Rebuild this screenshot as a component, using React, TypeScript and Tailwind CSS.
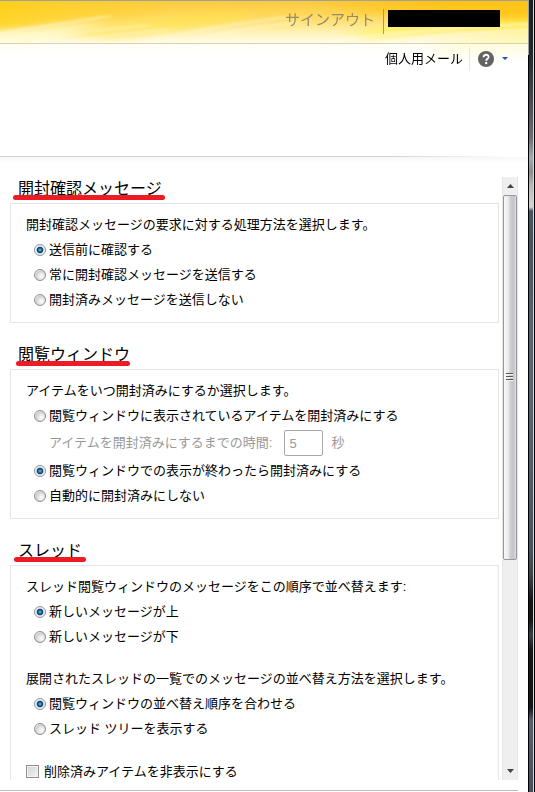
import React, { useState } from "react";

type Option = { value: string; label: string };

function RadioRow({ name, option, checked, onSelect }: { name: string; option: Option; checked: boolean; onSelect: (v: string) => void }) {
  const id = `${name}-${option.value}`;
  return (
    <div className="flex h-[25px] items-center gap-[3px] pl-2">
      <input
        type="radio"
        id={id}
        name={name}
        checked={checked}
        onChange={() => onSelect(option.value)}
        className="size-3 shrink-0 appearance-none rounded-full border border-[#8e8f8f] bg-[radial-gradient(circle_at_65%_65%,#f8f8f8_10%,#e2e2e2_40%,#c8cacc_62%,#f2f2f2_72%)] checked:border-[#8c979f] checked:bg-[radial-gradient(circle_at_50%_50%,#6fd0f4_0%,#2088bc_16%,#103a5e_40%,#e0e7eb_52%,#f6f6f6_75%)]"
      />
      <label htmlFor={id}>{option.label}</label>
    </div>
  );
}

function Section({ title, mark, children }: { title: string; mark: string; children: React.ReactNode }) {
  return (
    <section className="mb-5">
      <h2 className="flex h-[26px] pl-2 text-base leading-6">
        <span className="relative">
          {title}
          <span className={`absolute top-[18px] h-[5px] rounded-full bg-[#ed1c24] ${mark}`} />
        </span>
      </h2>
      <div className="border border-[#e5e5e5] px-[15px] pt-2 pb-2.5">{children}</div>
    </section>
  );
}

function Banner() {
  return (
    <svg className="absolute inset-0 size-full" viewBox="0 0 528 72" preserveAspectRatio="none" aria-hidden="true">
      <defs>
        <linearGradient id="base" x1="0" y1="0" x2="0" y2="1">
          <stop offset="0" stopColor="#ffcb40" />
          <stop offset="0.18" stopColor="#ffd657" />
          <stop offset="0.32" stopColor="#ffe585" />
          <stop offset="0.44" stopColor="#fff3b8" />
          <stop offset="0.56" stopColor="#fffbe0" />
          <stop offset="0.7" stopColor="#fffef6" />
          <stop offset="0.88" stopColor="#ffffff" />
        </linearGradient>
        <linearGradient id="gold" x1="0" y1="0" x2="1" y2="0">
          <stop offset="0" stopColor="#ffd000" stopOpacity="0.85" />
          <stop offset="1" stopColor="#ffd23c" stopOpacity="0.1" />
        </linearGradient>
        <linearGradient id="amber" x1="0" y1="0" x2="1" y2="0">
          <stop offset="0" stopColor="#ffc000" stopOpacity="0" />
          <stop offset="0.5" stopColor="#ffbe00" stopOpacity="0.6" />
          <stop offset="1" stopColor="#ffc000" stopOpacity="0.7" />
        </linearGradient>
        <linearGradient id="below" x1="0" y1="0" x2="0" y2="1">
          <stop offset="0" stopColor="#fff" stopOpacity="0.5" />
          <stop offset="1" stopColor="#fff" />
        </linearGradient>
        <filter id="soft" filterUnits="userSpaceOnUse" x="-60" y="-30" width="660" height="140" colorInterpolationFilters="sRGB">
          <feGaussianBlur stdDeviation="10 3" />
        </filter>
        <filter id="fine" filterUnits="userSpaceOnUse" x="-60" y="-30" width="660" height="140" colorInterpolationFilters="sRGB">
          <feGaussianBlur stdDeviation="4 1" />
        </filter>
      </defs>
      <rect width="528" height="72" fill="url(#base)" />
      <g filter="url(#soft)">
        <path d="M-60 -20H240L130 18L50 25L-60 34Z" fill="url(#gold)" />
        <path d="M60 34C110 20 170 14 240 8L250 18C200 28 150 34 110 38Z" fill="#ffe14a" opacity="0.6" />
        <path d="M-40 37C20 29 60 24 100 20C90 30 50 38 20 46H-40Z" fill="#fffcd0" opacity="0.6" />
        <path d="M280 -20H590V19C500 21 450 15 390 13C350 11 320 4 280 -10Z" fill="url(#amber)" />
        <path d="M350 32C400 20 450 22 590 16V30C480 28 420 32 370 38Z" fill="#fff03c" opacity="0.55" />
        <path d="M430 46C470 38 500 34 590 32V54L430 58Z" fill="#fff68c" opacity="0.5" />
      </g>
      <g filter="url(#fine)" fill="none" stroke="#fffde4" strokeWidth="2">
        <path d="M-10 33C30 28 60 22 110 15" opacity="0.6" />
        <path d="M30 42C70 32 100 29 150 24" opacity="0.5" />
        <path d="M60 43C100 34 130 32 170 28" opacity="0.5" />
        <path d="M150 38C190 32 230 22 290 16" opacity="0.5" />
        <path d="M190 40C220 32 250 26 300 21" opacity="0.5" />
        <path d="M330 40C400 30 450 27 540 22" opacity="0.6" />
        <path d="M380 42C430 34 480 32 540 28" opacity="0.6" />
      </g>
      <rect y="43" width="528" height="29" fill="url(#below)" />
    </svg>
  );
}

function WindowEdge() {
  return (
    <div className="flex w-[7px] shrink-0 bg-black" aria-hidden="true">
      <div className="h-[55px] w-px bg-[#a0a0a0]" />
      <div className="w-1 bg-[linear-gradient(to_bottom,#1c2029_0px,#242833_55px,#50535a_110px,#6c6f76_138px,#9fabb4_158px,#8c8c8c_172px,#b4b8bb_185px,#d2d5d8_207px,#465463_211px,#455365_240px,#566672_330px,#566672_400px,#465562_550px,#3c444b_575px,#15171a_600px,#15171a_620px,#3a4048_635px,#15171a_650px,#15171a_708px,#5a5f70_720px,#4a4d60_792px)]" />
      <div className="w-px bg-[#d5d8da]" />
    </div>
  );
}

function Scrollbar() {
  return (
    <div className="ml-[3px] flex w-4 shrink-0 flex-col border-x border-[#e6e6e6] bg-[#efefef]">
      <button aria-label="上へスクロール" className="flex h-[18px] shrink-0 items-center justify-center">
        <svg width="7" height="4" viewBox="0 0 7 4"><path d="M3.5 0L7 4H0Z" fill="#444" /></svg>
      </button>
      <div className="min-h-0 flex-1">
        <div className="flex h-9/14 items-center justify-center rounded-xs border border-[#979797] bg-[linear-gradient(to_right,#f8f8f8,#e8e8ea_42%,#cfd0d5_48%,#c4c5ca_80%,#e0e0e2)] pr-0.5">
          <svg width="7" height="8" viewBox="0 0 7 8">
            <path d="M0 0.5H7M0 3.5H7M0 6.5H7" stroke="#555" />
            <path d="M0 1.5H7M0 4.5H7M0 7.5H7" stroke="#f4f4f4" />
          </svg>
        </div>
      </div>
      <button aria-label="下へスクロール" className="flex h-[18px] shrink-0 items-center justify-center">
        <svg width="7" height="4" viewBox="0 0 7 4"><path d="M3.5 4L0 0H7Z" fill="#444" /></svg>
      </button>
    </div>
  );
}

const receiptOptions: Option[] = [
  { value: "ask", label: "送信前に確認する" },
  { value: "always", label: "常に開封確認メッセージを送信する" },
  { value: "never", label: "開封済みメッセージを送信しない" },
];

const orderOptions: Option[] = [
  { value: "top", label: "新しいメッセージが上" },
  { value: "bottom", label: "新しいメッセージが下" },
];

const treeOptions: Option[] = [
  { value: "match", label: "閲覧ウィンドウの並べ替え順序を合わせる" },
  { value: "tree", label: "スレッド ツリーを表示する" },
];

export default function App() {
  const [receipt, setReceipt] = useState("ask");
  const [reading, setReading] = useState("after");
  const [delay, setDelay] = useState("5");
  const [order, setOrder] = useState("top");
  const [tree, setTree] = useState("match");
  const [hideDeleted, setHideDeleted] = useState(false);

  return (
    <div className="flex h-screen bg-white font-['Liberation_Sans','Noto_Sans_CJK_JP',sans-serif] text-[13px] text-black">
      <div className="flex min-w-0 flex-1 flex-col">
        <header className="relative shrink-0 border-t border-[#a0a0a0]">
          <Banner />
          <div className="relative flex h-[43px] items-start justify-end border-b border-[#d3d3c0] pt-2 pr-7">
            <a href="#signout" className="text-[15px] leading-[22px] text-[#968c66]">サインアウト</a>
            <span className="ml-2 h-[25px] w-px bg-[#a89a60]" />
            <span className="mt-px ml-1 h-[17px] w-28 bg-black" />
          </div>
          <nav className="relative flex h-[29px] items-center justify-end pr-5">
            <a href="#mail">個人用メール</a>
            <span className="ml-1.5 h-6 w-px bg-[#dcebf5]" />
            <button aria-label="ヘルプ" className="ml-2 flex items-center gap-2">
              <svg width="16" height="16" viewBox="0 0 16 16">
                <circle cx="8" cy="8" r="8" fill="#626262" />
                <path d="M5.6 6.2C5.6 3 10.6 3 10.6 6C10.6 7.8 8.2 7.8 8.2 9.8" fill="none" stroke="#fff" strokeWidth="1.9" />
                <circle cx="8.2" cy="12" r="1.2" fill="#fff" />
              </svg>
              <svg width="6" height="3" viewBox="0 0 6 3"><path d="M0 0H6L3 3Z" fill="#2450b4" /></svg>
            </button>
          </nav>
        </header>

        <div className="h-[83px] shrink-0" />
        <div className="h-px shrink-0 bg-[linear-gradient(to_right,#d4d4d4_60%,#d4d4d4_75%,transparent_96%)]" />
        <div className="h-5 shrink-0 bg-[linear-gradient(to_bottom,#f6f6f6,white_30%)]" />

        <main className="mr-2.5 flex min-h-0 flex-1 pl-2.5">
          <div className="min-w-0 flex-1 overflow-hidden">
            <Section title="開封確認メッセージ" mark="-left-[5px] -right-[3px]">
              <p className="leading-[25px]">開封確認メッセージの要求に対する処理方法を選択します。</p>
              {receiptOptions.map((o) => (
                <RadioRow key={o.value} name="receipt" option={o} checked={receipt === o.value} onSelect={setReceipt} />
              ))}
            </Section>

            <Section title="閲覧ウィンドウ" mark="-left-[2px] right-0">
              <p className="leading-[25px]">アイテムをいつ開封済みにするか選択します。</p>
              <RadioRow name="reading" option={{ value: "shown", label: "閲覧ウィンドウに表示されているアイテムを開封済みにする" }} checked={reading === "shown"} onSelect={setReading} />
              <div className="flex h-[30px] items-center pl-[23px] text-[#999]">
                <label htmlFor="delay">アイテムを開封済みにするまでの時間:</label>
                <input
                  id="delay"
                  value={delay}
                  disabled={reading !== "shown"}
                  onChange={(e) => setDelay(e.target.value)}
                  className="mr-2 ml-3 h-[26px] w-[39px] rounded-xs border border-[#a8a8a8] bg-white px-1 text-[#999]"
                />
                <span>秒</span>
              </div>
              <RadioRow name="reading" option={{ value: "after", label: "閲覧ウィンドウでの表示が終わったら開封済みにする" }} checked={reading === "after"} onSelect={setReading} />
              <RadioRow name="reading" option={{ value: "never", label: "自動的に開封済みにしない" }} checked={reading === "never"} onSelect={setReading} />
            </Section>

            <Section title="スレッド" mark="-left-1 -right-1">
              <p className="leading-[25px]">スレッド閲覧ウィンドウのメッセージをこの順序で並べ替えます:</p>
              {orderOptions.map((o) => (
                <RadioRow key={o.value} name="order" option={o} checked={order === o.value} onSelect={setOrder} />
              ))}
              <p className="mt-[17px] leading-[25px]">展開されたスレッドの一覧でのメッセージの並べ替え方法を選択します。</p>
              {treeOptions.map((o) => (
                <RadioRow key={o.value} name="tree" option={o} checked={tree === o.value} onSelect={setTree} />
              ))}
              <div className="mt-[18px] flex h-[25px] items-center gap-[5px]">
                <input
                  type="checkbox"
                  id="hide-deleted"
                  checked={hideDeleted}
                  onChange={(e) => setHideDeleted(e.target.checked)}
                  className="size-[13px] shrink-0 appearance-none border border-[#8e8f8f] bg-[linear-gradient(135deg,#cfd2d6,#f4f4f4)] shadow-[inset_0_0_0_1px_#f4f4f4] checked:bg-[#2492c4]"
                />
                <label htmlFor="hide-deleted">削除済みアイテムを非表示にする</label>
              </div>
            </Section>
          </div>
          <Scrollbar />
        </main>
        <div className="mr-2.5 mt-2.5 mb-px h-px shrink-0 bg-[#bdbdbd]" />
      </div>
      <WindowEdge />
    </div>
  );
}
